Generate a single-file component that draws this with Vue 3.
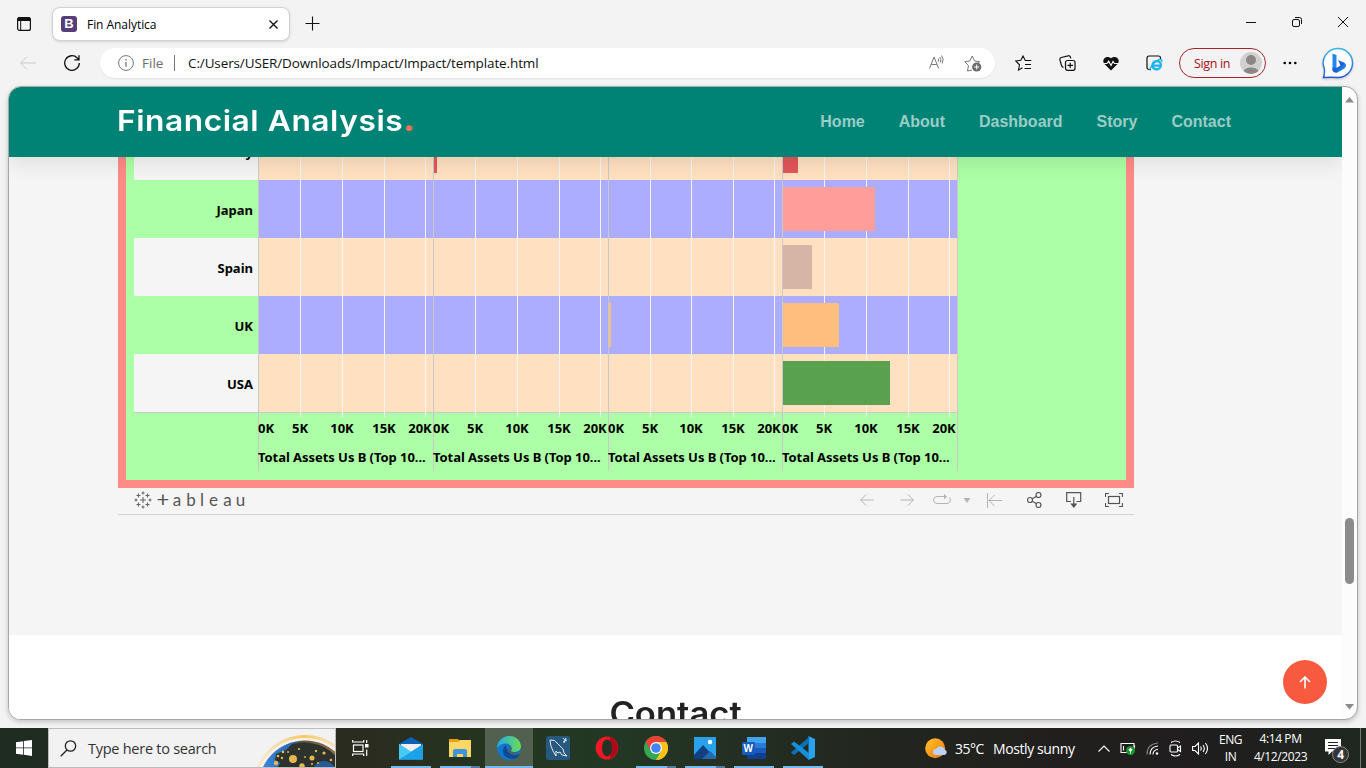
<script setup>
const nav = ['Home', 'About', 'Dashboard', 'Story', 'Contact']
const countries = ['Italy', 'Japan', 'Spain', 'UK', 'USA']
const panes = [
  { width: 175, ticks: [42, 84, 126, 167], bars: [] },
  { width: 175, ticks: [42, 84, 126, 167], bars: [{ row: 0, size: 3, color: '#e15759' }] },
  { width: 174, ticks: [42, 83, 125, 166], bars: [{ row: 3, size: 2, color: '#ffbe7d' }] },
  {
    width: 175,
    ticks: [42, 84, 126, 167],
    bars: [
      { row: 0, size: 15, color: '#e15759' },
      { row: 1, size: 92, color: '#ff9d9a' },
      { row: 2, size: 29, color: '#d7b5a6' },
      { row: 3, size: 56, color: '#ffbe7d' },
      { row: 4, size: 107, color: '#59a14f' },
    ],
  },
]
const axisLabels = (p) => [
  { text: '0K', x: 7 },
  { text: '5K', x: p.ticks[0] - 1 },
  { text: '10K', x: p.ticks[1] - 1 },
  { text: '15K', x: p.ticks[2] - 1 },
  { text: '20K', x: p.width - 14 },
]
</script>

<template>
  <div class="screen">
    <div class="titlebar">
      <svg class="tab-actions" width="16" height="16" viewBox="0 0 16 16"><rect x="1.6" y="1.6" width="12.8" height="12.8" rx="2" fill="none" stroke="#111" stroke-width="1.2"/><path d="M1.5 3a2 2 0 0 1 2-2h9a2 2 0 0 1 2 2v2h-13z" fill="#111"/><path d="M4.7 5v9.5" stroke="#111"/></svg>
      <div class="tab">
        <span class="favicon">B</span>
        <span class="tab-name">Fin Analytica</span>
        <svg width="9" height="9" viewBox="0 0 9 9"><path d="M.5.5l8 8M8.500.5l-8 8" stroke="#111" stroke-width="1.3"/></svg>
      </div>
      <svg class="new-tab" width="15" height="15" viewBox="0 0 15 15"><path d="M7.500.5v14M.5 7.500h14" stroke="#111" stroke-width="1.1"/></svg>
      <div class="window-buttons">
        <svg width="10" height="10" viewBox="0 0 10 10"><path d="M0 5.500h10" stroke="#111"/></svg>
        <svg width="10" height="10" viewBox="0 0 10 10" fill="none" stroke="#111"><rect x=".5" y="2.500" width="7" height="7" rx="1.500"/><path d="M3 .5h4.500a2 2 0 0 1 2 2V7"/></svg>
        <svg width="10" height="10" viewBox="0 0 10 10"><path d="M0 0l10 10M10 0L0 10" stroke="#111"/></svg>
      </div>
    </div>

    <div class="toolbar">
      <svg class="back" width="16" height="14" viewBox="0 0 16 14" fill="none" stroke="#c9c9c9"><path d="M7 .5L.7 7 7 13.500M.7 7H16"/></svg>
      <svg class="reload" width="16" height="16" viewBox="0 0 16 16" fill="none" stroke="#111" stroke-width="1.300"><path d="M15.300 8a7.300 7.300 0 1 1-2-5l1.700 1.700M15 .2v4.600h-4.600"/></svg>
      <div class="address">
        <svg width="16" height="16" viewBox="0 0 16 16" fill="none" stroke="#767676"><circle cx="8" cy="8" r="7.400"/><path d="M8 7v4.800M8 4v1.500" stroke-width="1.300"/></svg>
        <span class="scheme">File</span>
        <i class="divider"></i>
        <span class="url">C:/Users/USER/Downloads/Impact/Impact/template.html</span>
        <svg class="read" width="15" height="14" viewBox="0 0 15 14" fill="none" stroke="#777"><path d="M.5 13.500L5 2l4.700 11.500M2.200 9.500h5.600M9 3.500q1 1.200.3 3M10.800 2q2 2.600.4 5.600M12.500.5q3 3.600.6 8"/></svg>
        <svg width="18" height="17" viewBox="0 0 18 17" fill="none" stroke="#777"><path d="M8 15l-4.500 1 1-5.500L.7 6.700l5-.7L8.200 1l2.400 5 5 .7-2.200 2"/><circle cx="12.700" cy="12" r="4.600" fill="#6b6b6b" stroke="none"/><path d="M12.700 9.500v5M10.200 12h5" stroke="#fff"/></svg>
      </div>
      <div class="actions">
        <svg width="17" height="16" viewBox="0 0 17 16" fill="none" stroke="#111" stroke-width="1.100"><path d="M7.500 12.700L3.500 15l1-5.200L.8 6l5-.7L8 1l2.300 4.500h6M10 9.500h6M9.500 13.500h6.500"/></svg>
        <svg width="17" height="16" viewBox="0 0 17 16" fill="none" stroke="#111" stroke-width="1.200"><rect x="6.500" y="5.500" width="9.500" height="9.800" rx="2"/><path d="M11.200 7.700v5.400M8.500 10.400H14M4.500 12.500a3 3 0 0 1-2-2L.8 4.500a2 2 0 0 1 1.500-2L9 .8a2 2 0 0 1 2.500 1.500l.3 1"/></svg>
        <svg width="16" height="15" viewBox="0 0 16 15"><path d="M8 14.500L1 7.500C-1.500 3.500 3-1.500 8 2.200c5-3.700 9.500 1.300 7 5.300z" fill="#111"/><path d="M0 7.500h4l1.700-2.300L8 9.500l2-4 1.500 2H16" fill="none" stroke="#f3f3f3" stroke-width="1.200"/></svg>
        <svg width="17" height="16" viewBox="0 0 17 16" fill="none"><path d="M5 14.500H3a2 2 0 0 1-2-2V3a2 2 0 0 1 2-2h9.500a2 2 0 0 1 2 2v1" stroke="#111" stroke-width="1.200"/><path d="M14.700 11.800c-2 3.800-8.200 3.200-8.200-1.500 0-5.500 8.700-5.700 8.400.3H7" stroke="#1db4f0" stroke-width="2.300"/><path d="M4.500 15.500C2 14 10 4 15 4.500q1.500 0 .5 2.500" stroke="#1db4f0" stroke-width="1.300"/></svg>
      </div>
      <div class="signin"><span>Sign in</span>
        <svg width="22" height="22" viewBox="0 0 22 22"><circle cx="11" cy="11" r="11" fill="#d2d0ce"/><circle cx="11" cy="8" r="5" fill="#8a8886"/><path d="M3.500 19a8 5.500 0 0 1 15 0 11 11 0 0 1-15 0z" fill="#8a8886"/></svg>
      </div>
      <svg class="more" width="14" height="4" viewBox="0 0 14 4"><circle cx="1.700" cy="2" r="1.300"/><circle cx="7" cy="2" r="1.300"/><circle cx="12.300" cy="2" r="1.300"/></svg>
      <svg class="bing" width="32" height="32" viewBox="0 0 32 32"><defs><linearGradient id="bg" x1="0" y1="0" x2="0" y2="1"><stop offset="0" stop-color="#34b6e4"/><stop offset="1" stop-color="#2459d5"/></linearGradient><linearGradient id="bb" x1="0" y1="0" x2="1" y2="1"><stop offset="0" stop-color="#2a9df4"/><stop offset=".5" stop-color="#1c55dc"/><stop offset="1" stop-color="#2bd0e8"/></linearGradient></defs><path d="M16 1.500a14.500 14.500 0 1 1 0 29q-7-.5-14.500 0 1.500-4 .8-9A14.500 14.500 0 0 1 16 1.500z" fill="#fff" stroke="url(#bg)" stroke-width="1.400"/><path d="M10.500 6.500l4 1.500v13l-4 3z" fill="#2486ec"/><path d="M10.500 20l4 1 4-2.500-2.600-5.500 6 2.500q4 2.500.7 6l-7.500 4.300q-4 .5-4.600-3z" fill="url(#bb)"/></svg>
    </div>

    <div class="viewport">
      <div class="page">
        <header class="site-header">
          <h1>Financial Analysis<b>.</b></h1>
          <nav><a v-for="n in nav" :key="n">{{ n }}</a></nav>
        </header>
        <section class="story">
          <div class="viz">
            <div class="chart">
              <div class="labels">
                <div v-for="c in countries" :key="c" class="country">{{ c }}</div>
              </div>
              <div v-for="(p, i) in panes" :key="i" class="pane" :style="{ width: p.width + 'px' }">
                <div class="plot">
                  <div v-for="c in countries" :key="c" class="band"></div>
                  <i v-for="t in p.ticks" :key="t" class="grid-line" :style="{ left: t + 'px' }"></i>
                  <i v-for="b in p.bars" :key="b.row" class="bar" :style="{ top: b.row * 58 + 7 + 'px', width: b.size + 'px', background: b.color }"></i>
                </div>
                <div class="axis">
                  <span v-for="a in axisLabels(p)" :key="a.text" :style="{ left: a.x + 'px' }">{{ a.text }}</span>
                </div>
                <div class="axis-title">Total Assets Us B (Top 10...</div>
              </div>
              <i class="end-line"></i>
            </div>
          </div>
          <div class="viz-tools">
            <svg class="logo" width="18" height="18" viewBox="0 0 18 18" fill="none" stroke="#666" stroke-width="1.100"><path d="M9 6v6M6 9h6M9 .5v3M7.500 2h3M9 14.500v3M7.500 16h3M.5 9h3M2 7.500v3M14.500 9h3M16 7.500v3M4.500 2.500v4M2.500 4.500h4M13.500 2.500v4M11.500 4.500h4M4.500 11.500v4M2.500 13.500h4M13.500 11.500v4M11.500 13.500h4"/></svg>
            <span class="wordmark"><em class="plus">+</em><em>a</em><em>b</em><em class="ell">l</em><em class="e">e</em><em class="end">a</em><em class="end">u</em></span>
            <div class="viz-icons">
              <svg width="14" height="12" viewBox="0 0 14 12"><path d="M6 .5L.7 6 6 11.500M.7 6H13.500"/></svg>
              <svg width="14" height="12" viewBox="0 0 14 12"><path d="M8 .5L13.300 6 8 11.500M13.300 6H.5"/></svg>
              <svg width="18" height="12" viewBox="0 0 18 12"><path d="M12 2.500H4a3.500 3.500 0 0 0 0 7h10a3.500 3.500 0 0 0 2-6.300"/><path d="M11 0l3 2.500-3 3z" fill="#b4b4b4" stroke="none"/></svg>
              <svg width="8" height="5" viewBox="0 0 8 5"><path d="M.5 0h7L4 5z" fill="#b4b4b4" stroke="none"/></svg>
              <svg width="15" height="15" viewBox="0 0 15 15"><path d="M.5 0v15M7.500 2L2 7.500 7.500 13M2 7.500H15"/></svg>
              <svg class="dark" width="15" height="16" viewBox="0 0 15 16"><circle cx="11.500" cy="3" r="2.500"/><circle cx="3" cy="8" r="2.500"/><circle cx="11.500" cy="13" r="2.500"/><path d="M5.200 6.700l4-2.300M5.200 9.300l4 2.300"/></svg>
              <svg class="dark" width="16" height="16" viewBox="0 0 16 16"><path d="M5 9.500H.7V.7h14V9.500H10.500M7.800 5v7"/><path d="M5.500 12h4.600L7.800 15z" fill="#555"/></svg>
              <svg class="dark" width="18" height="14" viewBox="0 0 18 14"><rect x="3.500" y="3.500" width="11" height="7"/><path d="M.5 4V.5H4M14 .5h3.500V4M17.500 10v3.500H14M4 13.500H.5V10"/></svg>
            </div>
          </div>
        </section>
        <section class="contact">
          <h2>Contact</h2>
          <div class="to-top"><svg width="12" height="13" viewBox="0 0 12 13" fill="none" stroke="#fff" stroke-width="1.600"><path d="M1 6l5-5 5 5M6 1v11.500"/></svg></div>
        </section>
      </div>
      <div class="scrollbar">
        <svg width="9" height="6" viewBox="0 0 9 6"><path d="M0 5.500L4.500 0 9 5.500z" fill="#8b8b8b"/></svg>
        <i class="thumb"></i>
        <svg class="down" width="9" height="6" viewBox="0 0 9 6"><path d="M0 0L4.500 5.500 9 0z" fill="#8b8b8b"/></svg>
      </div>
    </div>

    <div class="taskbar">
      <div class="start"><svg width="16" height="16" viewBox="0 0 16 16" fill="#fff"><path d="M0 2.200l7.200-1v6.300H0zM8 1.100L16 0v7.500H8zM0 8.300h7.200v6.400L0 13.700zM8 8.300h8V16l-8-1.200z"/></svg></div>
      <div class="search">
        <svg width="17" height="17" viewBox="0 0 17 17" fill="none" stroke="#222" stroke-width="1.300"><circle cx="10.500" cy="6" r="5.200"/><path d="M7 10L.7 16.300"/></svg>
        <span>Type here to search</span>
        <svg class="globe" width="80" height="37" viewBox="0 0 80 37"><defs><linearGradient id="earth" x1="0" y1="0" x2="1" y2="0"><stop offset="0" stop-color="#3e8be0"/><stop offset=".36" stop-color="#2b66b4"/><stop offset=".46" stop-color="#5d553c"/><stop offset="1" stop-color="#a67c56"/></linearGradient><linearGradient id="glow"><stop offset="0" stop-color="#f8d27c" stop-opacity=".2"/><stop offset=".5" stop-color="#f8c963"/><stop offset="1" stop-color="#fbd795" stop-opacity=".1"/></linearGradient></defs><circle cx="50" cy="57" r="50.500" fill="none" stroke="url(#glow)" stroke-width="3"/><circle cx="50" cy="57" r="48" fill="#f8f2e2"/><circle cx="50" cy="57" r="46.500" fill="url(#earth)"/><path d="M37 14q14-4 30 2 8 4 13 9v13H22l3-5-5-3 1-6 10-4z" fill="#2e322c"/><path d="M59 37q4-7 11-6 6 1 10 6z" fill="#285b9c"/><g fill="#e5b84b"><circle cx="38" cy="29" r="4"/><circle cx="57" cy="28" r="2.500"/><circle cx="47" cy="36" r="2.700"/><circle cx="21" cy="33" r="2.200"/><circle cx="69" cy="23" r="1.600"/><circle cx="61" cy="21" r="1.200"/><circle cx="76" cy="30" r="1.300"/><circle cx="28" cy="22" r="1.300"/><circle cx="44" cy="19" r="1.100"/><circle cx="23" cy="26" r="1.300"/><circle cx="33" cy="22" r="1"/><circle cx="50" cy="27" r=".9"/><circle cx="57" cy="34" r="1.100"/><circle cx="27" cy="28" r="1.200"/><circle cx="63" cy="33" r="1"/></g></svg>
      </div>
      <div class="task-view"><svg width="17" height="16" viewBox="0 0 17 16" fill="none" stroke="#fff" stroke-width="1.200"><rect x="1.500" y="5" width="9.500" height="6.500"/><path d="M.7 0v2h11V0M.7 16v-2h11v2M14.700 0v3M14.700 9.500V16"/><path d="M13 4h3.500v3.500H13z" fill="#fff" stroke="none"/></svg></div>
      <div class="apps">
        <div class="app on"><svg viewBox="0 0 24 24"><path d="M0 8L12 1l12 7v6H0z" fill="#0b63b8"/><path d="M2 8h20v8H2z" fill="#f1f1f1"/><path d="M0 8l24 15.500H0z" fill="#36c5f5"/><path d="M24 8v15.500H0z" fill="#1ba2e8"/><path d="M0 8l12 7.800L0 23.500z" fill="#45cbf5"/></svg></div>
        <div class="app on multi"><svg viewBox="0 0 24 24"><path d="M1 3h9l2 2h11v16H1z" fill="#e6a10d"/><path d="M1 6h9l2-2h11v17H1z" fill="#ffd767"/><path d="M5 21v-6q0-2 2-2h10q2 0 2 2v6h-4v-3H9v3z" fill="#3f94d8"/></svg></div>
        <div class="app on active"><svg viewBox="0 0 24 24"><defs><linearGradient id="eg"><stop offset="0" stop-color="#28a8e5"/><stop offset="1" stop-color="#68dd54"/></linearGradient></defs><circle cx="12" cy="12" r="12" fill="#1175ca"/><path d="M0 12C1-3 22-4 24 10c0 6-7 7-10 5 4-7-8-11-14-3z" fill="url(#eg)"/><path d="M9 9c-7 7-1 14 7 14 3 0 6-3 6.500-5-5 3-13 0-13.500-9z" fill="#0c4a98"/><path d="M12.500 10.500q3 2 1.300 5.200 4 2.300 8.700 0-3 4-8 2.500-5-2-2-7.700z" fill="#52605a"/></svg></div>
        <div class="app"><svg viewBox="0 0 24 24"><rect width="24" height="24" rx="2.500" fill="#27587f"/><path d="M4 4q5-1 8 4l5 5 1 4 3 3-5-1-2-3-2 1-2-2v5L7 15q-3-6-3-11zM17 2l2 2M20 2l-2 5M17 6l4-2" fill="none" stroke="#e5ecf1" stroke-width="1"/></svg></div>
        <div class="app"><svg viewBox="0 0 24 24"><ellipse cx="12" cy="12" rx="11.300" ry="11.500" fill="#ef1826"/><path d="M15 1q8 3 8 11t-8 11" fill="#a90c1b"/><ellipse cx="12" cy="12" rx="5" ry="8.500" fill="#233325"/></svg></div>
        <div class="app on multi"><svg viewBox="0 0 24 24"><circle cx="12" cy="12" r="12" fill="#35a853"/><path d="M1.600 6A12 12 0 0 1 22.400 6H12L7 15z" fill="#e94235"/><path d="M22.400 6A12 12 0 0 1 12 24l5.200-9L12 6z" fill="#fbc116"/><circle cx="12" cy="12" r="6" fill="#fff"/><circle cx="12" cy="12" r="4.800" fill="#4285f4"/></svg></div>
        <div class="app on multi"><svg viewBox="0 0 24 24"><path d="M1 1h22v22H1z" fill="#29a2e9"/><path d="M1 19L10 9l13 14H1z" fill="#113f83"/><path d="M9 23l8-8 6 6v2z" fill="#2767ad"/><circle cx="17" cy="6" r="2.200" fill="#fff"/></svg></div>
        <div class="app on"><svg viewBox="0 0 24 24"><path d="M5 1h19v6H5z" fill="#41a5ee"/><path d="M5 7h19v5H5z" fill="#2b7cd3"/><path d="M5 12h19v5H5z" fill="#185abd"/><path d="M5 17h19v6H5z" fill="#103f91"/><rect y="6" width="13" height="13" rx="1" fill="#185abd"/><text x="1.500" y="16" class="word-w">W</text></svg></div>
        <div class="app on"><svg viewBox="0 0 24 24"><path d="M17.500 0L24 3v18l-6.500 3z" fill="#29a3ed"/><path d="M18 1v6L3 19l-3-2.500z" fill="#0871b8"/><path d="M0 8l3-2.500L18 17v7z" fill="#1690dc"/></svg></div>
      </div>
      <div class="weather">
        <svg width="23" height="21" viewBox="0 0 23 21"><defs><linearGradient id="sun" x1="0" y1="0" x2="1" y2="1"><stop offset="0" stop-color="#ffc928"/><stop offset="1" stop-color="#f0700e"/></linearGradient></defs><circle cx="10.200" cy="10.200" r="10" fill="url(#sun)"/><path d="M11 17a3 3 0 0 1 0-6 4.600 4.600 0 0 1 8.500.5A2.800 2.800 0 0 1 19.500 17z" fill="#b9d3fa"/></svg>
        <span class="temp">35°C</span><span class="sky">Mostly sunny</span>
      </div>
      <div class="tray">
        <svg width="12" height="7" viewBox="0 0 12 7"><path d="M.5 6.500L6 1l5.500 5.500"/></svg>
        <svg width="16" height="13" viewBox="0 0 16 13"><path d="M8 10.500H1v-9h13V5M14.500 3.500v3M3.500 4v4.500"/><circle cx="10.500" cy="8.500" r="4.500" fill="#16962c" stroke="none"/><path d="M10.500 6l1.700 2-1.700 1.500L8.800 8zM10.500 8v4" fill="#fff" stroke-width=".7"/></svg>
        <svg width="13" height="13" viewBox="0 0 13 13"><path d="M1 12.500Q1 2 12 1" stroke="#888"/><path d="M4 12.500Q4 5 12 4M7 12.500Q7 8 12 7.200"/><circle cx="11" cy="11.500" r="1.200" fill="#fff" stroke="none"/></svg>
        <svg width="13" height="17" viewBox="0 0 13 17"><rect x="1" y="5" width="7.500" height="7" rx="1"/><path d="M8.500 8l3-2v5.500l-3-2M2 2.500q4.500-3 9 0M2 14.500q4.500 3 9 0"/></svg>
        <svg width="17" height="13" viewBox="0 0 17 13"><path d="M.6 4.500H3L6.500 1v11L3 8.500H.6zM8.500 4.500q1.500 2 0 4M11 3q2.600 3.500 0 7M13.500 1q4 5.500 0 11"/></svg>
      </div>
      <div class="lang"><span>ENG</span><span>IN</span></div>
      <div class="clock"><span class="time">4:14 PM</span><span>4/12/2023</span></div>
      <div class="notice"><svg width="25" height="26" viewBox="0 0 25 26"><path d="M0 1h16v12.500H7L3.500 17v-3.500H0z" fill="#fff"/><path d="M3 4.500h10M3 7.500h10M3 10.500h7" stroke="#222"/><circle cx="15.500" cy="16.500" r="8" fill="#333537" stroke="#888"/><text x="12.200" y="21" class="count">4</text></svg></div>
    </div>
  </div>
</template>

<style>
body { margin: 0; overflow: hidden; }
</style>

<style scoped>
* { box-sizing: border-box; }
.screen { width: 1366px; height: 768px; background: #f3f3f3; display: flex; flex-direction: column; font-family: "Open Sans", "Noto Sans", sans-serif; overflow: hidden; white-space: nowrap; }
svg { display: block; flex: none; }
.titlebar { height: 47px; display: flex; align-items: center; padding: 0 18px 0 16px; flex: none; }
.tab { margin-left: 20px; width: 238px; height: 34px; margin-top: 1px; border: 1px solid #d2d2d2; border-radius: 8px; background: #fff; box-shadow: 0 1px 3px #0002; display: flex; align-items: center; padding: 0 11px 0 8px; }
.favicon { width: 16px; height: 16px; border-radius: 3px; background: #563d7c; color: #fff; font: bold 13px/16px "Liberation Sans", sans-serif; text-align: center; }
.tab-name { margin-left: 10px; font-size: 12px; font-weight: 500; letter-spacing: -.05px; color: #000; flex: 1; }
.new-tab { margin-left: 15px; }
.window-buttons { margin-left: auto; display: flex; gap: 36px; padding-bottom: 3px; }
.toolbar { height: 39px; display: flex; align-items: flex-start; flex: none; padding-left: 20px; }
.back { margin-top: 9px; }
.reload { margin: 8px 0 0 28px; }
.address { margin: 1px 0 0 20px; width: 895px; height: 30px; border-radius: 15px; background: #fff; box-shadow: 0 1px 2px #0001; display: flex; align-items: center; padding: 0 13px 0 18px; font-size: 14px; }
.scheme { width: 32px; margin-left: 8px; color: #6c6c6c; font-size: 13.500px; }
.divider { width: 1px; height: 16px; background: #777; }
.url { margin-left: 13px; flex: 1; color: #111; font-size: 13.500px; letter-spacing: -.12px; }
.read { margin-right: 20px; margin-top: -2px; }
.actions { display: flex; gap: 27px; margin: 8px 0 0 20px; align-items: center; }
.signin { margin: 1px 0 0 16px; width: 87px; height: 30px; border: 1px solid #a4262c; border-radius: 15px; display: flex; align-items: center; justify-content: space-between; padding: 0 3px 0 14px; color: #a80f17; font-size: 12.500px; letter-spacing: -.35px; }
.more { margin: 14px 0 0 17px; }
.bing { margin: 0 0 0 25px; filter: drop-shadow(0 1px 1px #0003); }
.viewport { margin-left: 8px; width: 1350px; height: 634px; border: 1px solid #a6a6a6; border-radius: 13px; overflow: hidden; background: #fcfcfc; box-shadow: 0 2px 5px #0003; display: flex; flex: none; }
.page { width: 1333px; background: #fff; display: flex; flex-direction: column; }
.site-header { height: 70px; flex: none; background: #008374; position: relative; z-index: 2; box-shadow: 0 6px 20px #0000001a; clip-path: inset(0 0 -30px 0); display: flex; align-items: center; padding: 0 111px 0 108px; justify-content: space-between; }
h1 { margin: 0 0 2px; color: #fff; font: 600 29px/40px Inter, sans-serif; letter-spacing: .5px; transform: scaleX(1.094); transform-origin: left; }
h1 b { color: #f96f59; }
nav { display: flex; }
nav a { color: #99cdc7; font: bold 16px/24px "Liberation Sans", sans-serif; margin-left: 34px; }
.story { height: 478px; flex: none; background: #f5f5f5; padding-left: 109px; overflow: hidden; }
.viz { margin-top: -43px; width: 1016px; height: 374px; border: 8px solid #ff8b87; background: #acffa6; padding-left: 8px; }
.chart { display: flex; height: 349px; }
.labels { width: 124px; height: 291px; border-bottom: 1px solid #c9c9c9; }
.country { height: 58px; padding-right: 5px; text-align: right; font: 700 13px/61px "Noto Sans", sans-serif; color: #000; }
.country:nth-child(odd) { background: #f5f5f5; }
.pane { border-left: 1px solid #c9c9c9; height: 349px; }
.plot { position: relative; height: 291px; border-bottom: 1px solid #c9c9c9; }
.band { height: 58px; background: #ffe1c2; }
.band:nth-child(even) { background: #adadff; }
.grid-line { position: absolute; margin-left: -1px; top: 0; width: 1px; height: 295px; background: #f5f5f5; }
.bar { position: absolute; left: 0; height: 44px; }
.axis { position: relative; height: 30px; font: 700 13px/30px "Noto Sans", sans-serif; }
.axis span { position: absolute; transform: translateX(-50%); }
.axis-title { font: 700 13px/29px "Noto Sans", sans-serif; height: 28px; letter-spacing: -.05px; margin-left: -1px; }
.end-line { width: 1px; background: #c9c9c9; }
.viz-tools { width: 1016px; height: 27px; border-bottom: 1px solid #d4d4d4; display: flex; align-items: center; padding: 0 11px 2px 16px; }
.wordmark { display: flex; margin-left: 4px; font: 17px/20px "Lato", sans-serif; color: #555; }
.wordmark em { font-style: normal; width: 14px; text-align: center; }
.wordmark .plus { font-size: 22px; line-height: 18px; }
.wordmark .ell { width: 8px; }
.wordmark .e { width: 15px; }
.wordmark .end { width: 13px; }
.viz-icons { margin-left: auto; display: flex; align-items: center; fill: none; stroke: #b4b4b4; }
.viz-icons svg + svg { margin-left: 26px; }
.viz-icons svg:nth-child(3) { margin-left: 19px; }
.viz-icons svg:nth-child(4) { margin-left: 12px; }
.viz-icons svg:nth-child(5) { margin-left: 16px; }
.viz-icons svg:nth-child(6) { margin-left: 25px; }
.viz-icons svg:nth-child(7) { margin-left: 24px; }
.viz-icons svg:nth-child(8) { margin-left: 23px; }
.viz-icons .dark { stroke: #555; stroke-width: 1.200; }
.contact { flex: 1; background: #fff; position: relative; overflow: hidden; }
h2 { margin: 57px 0 0; text-align: center; color: #222; font: 600 32px/43px Inter, sans-serif; transform: scaleX(1.08); }
.to-top { position: absolute; right: 15px; top: 25px; width: 44px; height: 44px; border-radius: 50%; background: #f85a40; display: grid; place-items: center; }
.scrollbar { width: 15px; display: flex; flex-direction: column; align-items: center; padding: 10px 0 9px; }
.thumb { width: 9px; height: 66px; border-radius: 5px; background: #8b8b8b; margin-top: 415px; }
.down { margin-top: auto; }
.taskbar { margin-top: 8px; height: 40px; flex: none; display: flex; background: linear-gradient(90deg, #1e2c21 0, #222b21 10%, #2b2c20 27%, #24351f 36%, #223824 45%, #243023 53%, #22251f 65%, #211f1e 78%, #1f1e1e 90%, #202820 100%); color: #fff; }
.start { width: 48px; display: grid; place-items: center; }
.search { width: 288px; border: 1px solid #bcbcbc; background: #f2f2f2; position: relative; display: flex; align-items: center; padding-left: 11px; color: #333; font-size: 14.500px; overflow: hidden; }
.search span { margin-left: 11px; letter-spacing: -.26px; }
.globe { position: absolute; right: 0; bottom: 0; }
.task-view { width: 51px; padding-left: 16px; display: flex; align-items: center; }
.apps { display: flex; gap: 1px; }
.app { width: 48px; height: 40px; padding: 8px 12px; position: relative; }
.app svg { width: 24px; height: 24px; }
.app.active { background: #52604f; }
.app.on::after { content: ""; position: absolute; left: 4px; right: 4px; bottom: 0; height: 2px; background: #76b9ed; }
.app.active::after { left: 0; right: 0; }
.app.multi::after { background: linear-gradient(90deg, #76b9ed 31px, #557d9b 31px); }
.word-w { font: bold 10px "Liberation Sans", sans-serif; fill: #fff; }
.weather { margin-left: 98px; display: flex; align-items: center; font-size: 14px; }
.temp { margin-left: 7px; width: 38px; letter-spacing: -.5px; }
.sky { width: 105px; letter-spacing: -.4px; }
.tray { display: flex; align-items: center; gap: 10px; width: 116px; fill: none; stroke: #fff; stroke-width: 1.100; }
.lang, .clock { display: flex; flex-direction: column; align-items: center; font-size: 12px; line-height: 17px; padding-top: 3px; letter-spacing: -.4px; }
.lang { width: 33px; }
.clock { width: 67px; padding-top: 2px; line-height: 18px; }
.notice { padding: 10px 0 0 11px; width: 47px; border-right: 1px solid #777; }
.count { font: bold 12px "Open Sans", sans-serif; fill: #fff; }
</style>
